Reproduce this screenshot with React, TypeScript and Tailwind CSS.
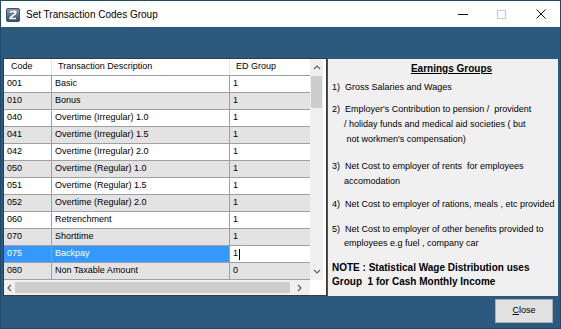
import React from "react";

const rows: [string, string, string][] = [
  ["001", "Basic", "1"],
  ["010", "Bonus", "1"],
  ["040", "Overtime (Irregular) 1.0", "1"],
  ["041", "Overtime (Irregular) 1.5", "1"],
  ["042", "Overtime (Irregular) 2.0", "1"],
  ["050", "Overtime (Regular) 1.0", "1"],
  ["051", "Overtime (Regular) 1.5", "1"],
  ["052", "Overtime (Regular) 2.0", "1"],
  ["060", "Retrenchment", "1"],
  ["070", "Shorttime", "1"],
  ["075", "Backpay", "1"],
  ["080", "Non Taxable Amount", "0"],
];

function AppIcon() {
  return (
    <svg width="14" height="14" viewBox="0 0 14 14">
      <defs>
        <linearGradient id="ig" x1="0" y1="0" x2="0" y2="1">
          <stop offset="0" stopColor="#8aa0b6" />
          <stop offset="1" stopColor="#2f4b66" />
        </linearGradient>
      </defs>
      <rect x="0.5" y="0.5" width="13" height="13" rx="1.5" fill="url(#ig)" stroke="#3d5570" />
      <path d="M4 4.5 C5 3 9.5 3 9.5 5.2 C9.5 7 5 7.5 4 10.5 L10 10.5" fill="none" stroke="#fff" strokeWidth="1.6" />
      <path d="M8 2.5 L10.5 4 L8.5 5.5" fill="none" stroke="#fff" strokeWidth="1" />
    </svg>
  );
}

function Chevron({ dir }: { dir: "up" | "down" | "left" | "right" }) {
  const d =
    dir === "up"
      ? "M1 5 L4 2 L7 5"
      : dir === "down"
      ? "M1 2 L4 5 L7 2"
      : dir === "left"
      ? "M5 1 L2 4 L5 7"
      : "M2 1 L5 4 L2 7";
  return (
    <svg width="8" height="8" viewBox="0 0 8 8">
      <path d={d} fill="none" stroke="#606060" strokeWidth="1.2" />
    </svg>
  );
}

export default function App() {
  return (
    <div
      className="w-[561px] h-[329px] box-border border border-[#1f4a6b] bg-[#2b5a7e] flex flex-col overflow-hidden text-black"
      style={{ fontFamily: '"Liberation Sans", Arial, sans-serif' }}
    >
      {/* Title bar */}
      <div className="h-[26px] bg-white flex items-center shrink-0">
        <div className="ml-[5px] mt-[1px] flex items-center">
          <AppIcon />
        </div>
        <div className="ml-[6px] text-[10px] text-black">Set Transaction Codes Group</div>
        <div className="ml-auto flex h-full">
          <div className="w-[39px] h-full flex items-center justify-center">
            <div className="w-[10px] h-[1px] bg-[#111]" />
          </div>
          <div className="w-[39px] h-full flex items-center justify-center">
            <div className="w-[9px] h-[9px] border border-[#c8c8c8]" />
          </div>
          <div className="w-[39px] h-full flex items-center justify-center">
            <svg width="10" height="10" viewBox="0 0 10 10">
              <path d="M0.5 0.5 L9.5 9.5 M9.5 0.5 L0.5 9.5" stroke="#111" strokeWidth="1" />
            </svg>
          </div>
        </div>
      </div>

      {/* Body */}
      <div className="flex pl-[2px] mt-[31px]">
        {/* Grid */}
        <div className="w-[324px] h-[238px] box-border border border-[#3a3a3a] bg-white flex flex-col text-[9px]">
          <div className="flex h-[221px]">
            <div className="w-[306px] flex flex-col">
              {/* header */}
              <div className="flex h-[17px] bg-white border-b border-[#a0a0a0] box-border items-center">
                <div className="w-[48px] h-full flex items-center pl-[7px] border-r border-[#e5e5e5] box-border">Code</div>
                <div className="w-[178px] h-full flex items-center pl-[6px] border-r border-[#e5e5e5] box-border">
                  Transaction Description
                </div>
                <div className="w-[80px] h-full flex items-center pl-[6px]">ED Group</div>
              </div>
              {rows.map((r, i) => {
                const sel = r[0] === "075";
                const bg = i % 2 === 0 ? "bg-white" : "bg-[#e3e3e3]";
                return (
                  <div key={r[0]} className={`flex h-[17px] border-b border-[#a0a0a0] box-border ${bg}`}>
                    <div
                      className={`w-[48px] h-full flex items-center pl-[3px] border-r border-[#a0a0a0] box-border ${
                        sel ? "bg-[#3399ff] text-white" : ""
                      }`}
                    >
                      {r[0]}
                    </div>
                    <div
                      className={`w-[178px] h-full flex items-center pl-[3px] border-r border-[#a0a0a0] box-border ${
                        sel ? "bg-[#3399ff] text-white" : ""
                      }`}
                    >
                      {r[1]}
                    </div>
                    <div className={`w-[80px] h-full flex items-center pl-[3px] ${sel ? "bg-white" : ""}`}>
                      {r[2]}
                      {sel && <span className="inline-block w-[1px] h-[11px] bg-black ml-[1px]" />}
                    </div>
                  </div>
                );
              })}
            </div>
            {/* vertical scrollbar */}
            <div className="w-[13px] h-full bg-[#f0f0f0] flex flex-col">
              <div className="h-[17px] flex items-center justify-center">
                <Chevron dir="up" />
              </div>
              <div className="mx-[1px] h-[32px] bg-[#cdcdcd]" />
              <div className="flex-1" />
              <div className="h-[17px] flex items-center justify-center">
                <Chevron dir="down" />
              </div>
            </div>
            <div className="w-[3px] h-full bg-white" />
          </div>
          {/* horizontal scrollbar */}
          <div className="flex h-[15px]">
            <div className="w-[306px] h-full bg-[#f0f0f0] flex items-center">
              <div className="w-[11px] flex items-center justify-center">
                <Chevron dir="left" />
              </div>
              <div className="w-[275px] h-[11px] bg-[#cdcdcd]" />
              <div className="flex-1 flex items-center justify-center">
                <Chevron dir="right" />
              </div>
            </div>
            <div className="flex-1 bg-white" />
          </div>
        </div>

        {/* Info panel */}
        <div className="ml-[1px] mt-[1px] w-[230px] h-[237px] bg-[#f0f0f0] text-[9px] leading-[14px] flex flex-col">
          <div className="mt-[3px] pl-[17px] text-center text-[10px] font-bold underline">Earnings Groups</div>
          <div className="mt-[4px] pl-[4px] whitespace-pre">1)  Gross Salaries and Wages</div>
          <div className="mt-[8px] pl-[4px] leading-[15px]">
            <div className="whitespace-pre">2)  Employer's Contribution to pension /  provident</div>
            <div className="whitespace-pre pl-[12px]">/ holiday funds and medical aid societies ( but</div>
            <div className="whitespace-pre pl-[12px]"> not workmen's compensation)</div>
          </div>
          <div className="mt-[12px] pl-[4px] leading-[15px]">
            <div className="whitespace-pre">3)  Net Cost to employer of rents  for employees</div>
            <div className="whitespace-pre pl-[12px]">accomodation</div>
          </div>
          <div className="mt-[8px] pl-[4px] whitespace-pre">4)  Net Cost to employer of rations, meals , etc provided</div>
          <div className="mt-[11px] pl-[4px]">
            <div className="whitespace-pre">5)  Net Cost to employer of other benefits provided to</div>
            <div className="whitespace-pre pl-[12px]">employees e.g fuel , company car</div>
          </div>
          <div className="mt-[11px] pl-[4px] text-[10px] font-bold">
            <div className="whitespace-pre">NOTE : Statistical Wage Distribution uses</div>
            <div className="whitespace-pre">Group  1 for Cash Monthly Income</div>
          </div>
        </div>
      </div>

      {/* Close button */}
      <div className="flex justify-end pr-[7px] mt-[3px]">
        <div className="w-[58px] h-[24px] box-border border border-[#adadad] bg-[#e1e1e1] flex items-center justify-center text-[9px]">
          <span>
            <span className="underline">C</span>lose
          </span>
        </div>
      </div>
    </div>
  );
}
